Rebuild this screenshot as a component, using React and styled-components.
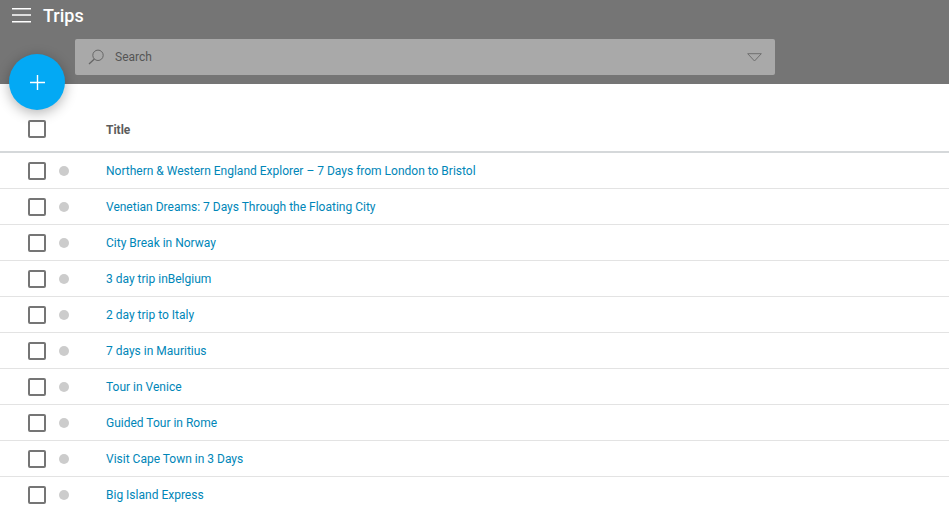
import React from "react";
import styled, { createGlobalStyle } from "styled-components";

const GlobalStyle = createGlobalStyle`
  html, body {
    margin: 0;
    height: 100%;
    overflow: hidden;
    background: #fff;
    font-family: Roboto, "Liberation Sans", sans-serif;
  }
`;

const Page = styled.div`
  position: relative;
  width: 949px;
  height: 508px;
  overflow: hidden;
`;

const Header = styled.header`
  height: 84px;
  background: #757575;
  box-sizing: border-box;
  padding: 7px 0 0 12px;
`;

const TitleBar = styled.div`
  display: flex;
  align-items: center;
  height: 18px;
  gap: 12px;
`;

const MenuIcon = styled.svg`
  width: 19px;
  height: 16px;
  display: block;
  align-self: flex-start;
`;

const PageTitle = styled.h1`
  margin: 0;
  font-size: 18px;
  font-weight: 500;
  line-height: 18px;
  color: #fff;
`;

const SearchBar = styled.div`
  display: flex;
  align-items: center;
  box-sizing: border-box;
  width: 700px;
  height: 36px;
  margin: 14px 0 0 63px;
  padding: 0 13px 0 13px;
  background: #a9a9a9;
  border-radius: 2px;
`;

const SearchLabel = styled.span`
  flex: 1;
  margin-left: 10px;
  font-size: 12px;
  color: #555;
`;

const Fab = styled.button`
  position: absolute;
  left: 9px;
  top: 54px;
  width: 56px;
  height: 56px;
  padding: 0;
  border: none;
  border-radius: 50%;
  background: #03a9f4;
  box-shadow: 0 3px 13px rgba(0, 0, 0, 0.3);
  display: flex;
  align-items: center;
  justify-content: center;
`;

const Row = styled.div`
  display: flex;
  align-items: center;
  box-sizing: border-box;
  height: ${(p) => (p.$head ? "69px" : "36px")};
  padding: ${(p) => (p.$head ? "22px 0 0 28px" : "0 0 0 28px")};
  border-bottom: ${(p) => (p.$head ? "2px solid #d5d8da" : "1px solid #e3e3e3")};
`;

const Checkbox = styled.span`
  box-sizing: border-box;
  width: 18px;
  height: 18px;
  border: 2px solid #757575;
  border-radius: 2px;
  flex: none;
`;

const StatusSlot = styled.span`
  width: 60px;
  flex: none;
  display: flex;
  padding-left: 13px;
  box-sizing: border-box;
`;

const Dot = styled.span`
  width: 10px;
  height: 10px;
  border-radius: 50%;
  background: #cccccc;
`;

const HeadLabel = styled.span`
  margin-top: 2px;
  font-size: 12px;
  font-weight: 700;
  color: #5c5c5c;
`;

const TripLink = styled.a`
  font-size: 12px;
  color: #0086b8;
  text-decoration: none;
`;

const trips = [
  "Northern & Western England Explorer – 7 Days from London to Bristol",
  "Venetian Dreams: 7 Days Through the Floating City",
  "City Break in Norway",
  "3 day trip inBelgium",
  "2 day trip to Italy",
  "7 days in Mauritius",
  "Tour in Venice",
  "Guided Tour in Rome",
  "Visit Cape Town in 3 Days",
  "Big Island Express",
];

export default function App() {
  return (
    <Page>
      <GlobalStyle />
      <Header>
        <TitleBar>
          <MenuIcon viewBox="0 0 19 16">
            <path d="M0 1.7h19M0 8h19M0 14.7h19" stroke="#fff" strokeWidth="1.6" />
          </MenuIcon>
          <PageTitle>Trips</PageTitle>
        </TitleBar>
        <SearchBar>
          <svg width="17" height="17" viewBox="0 0 17 17" fill="none">
            <circle cx="10" cy="6.3" r="5.2" stroke="#666" strokeWidth="1" />
            <path d="M6.4 10 1 15" stroke="#666" strokeWidth="1.3" />
          </svg>
          <SearchLabel>Search</SearchLabel>
          <svg width="15" height="9" viewBox="0 0 15 9" fill="none">
            <path d="M.7.7h13.6L7.5 8z" stroke="#6f6f6f" strokeWidth="1" />
          </svg>
        </SearchBar>
      </Header>
      <Fab aria-label="Add trip">
        <svg width="15" height="15" viewBox="0 0 15 15">
          <path d="M7.5 0v15M0 7.5h15" stroke="#fff" strokeWidth="1.4" />
        </svg>
      </Fab>
      <Row $head>
        <Checkbox />
        <StatusSlot />
        <HeadLabel>Title</HeadLabel>
      </Row>
      {trips.map((trip) => (
        <Row key={trip}>
          <Checkbox />
          <StatusSlot>
            <Dot />
          </StatusSlot>
          <TripLink href="#">{trip}</TripLink>
        </Row>
      ))}
    </Page>
  );
}
